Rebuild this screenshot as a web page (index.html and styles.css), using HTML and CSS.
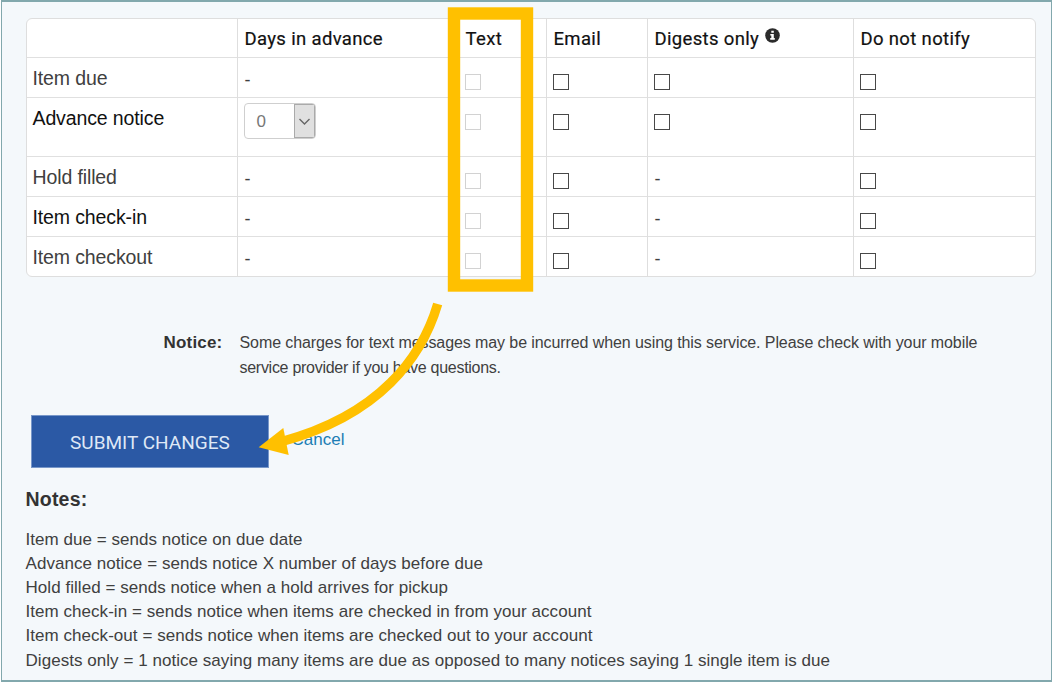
FILE: index.html
```html
<!DOCTYPE html>
<html lang="en">
<head>
<meta charset="utf-8">
<title>Notification settings</title>
<link rel="stylesheet" href="styles.css">
</head>
<body>
<main class="page">
  <div class="table">
    <div class="row head"><div></div><div><span>Days in advance</span></div><div><span>Text</span></div><div><span>Email</span></div><div><span>Digests only</span><svg class="info" viewBox="0 0 15 15"><circle cx="7.5" cy="7.5" r="7.3" fill="#2b2b2b"/><path d="M6.3 2.7h2.5v2H6.3zM5.3 5.9h3.5v4.2h1v1.6H5.2v-1.6h1.1V7.4h-1z" fill="#fff"/></svg></div><div><span>Do not notify</span></div></div>
    <div class="row"><div class="name">Item due</div><div class="dash">-</div><div><i class="box off"></i></div><div><i class="box"></i></div><div><i class="box"></i></div><div><i class="box"></i></div></div>
    <div class="row tall"><div class="name strong">Advance notice</div><div><div class="select"><span>0</span><b><svg viewBox="0 0 19 32"><path d="M4.5 14l5 5 5-5" fill="none" stroke="#666" stroke-width="1.4"/></svg></b></div></div><div><i class="box off"></i></div><div><i class="box"></i></div><div><i class="box"></i></div><div><i class="box"></i></div></div>
    <div class="row"><div class="name">Hold filled</div><div class="dash">-</div><div><i class="box off"></i></div><div><i class="box"></i></div><div class="dash">-</div><div><i class="box"></i></div></div>
    <div class="row"><div class="name strong">Item check-in</div><div class="dash">-</div><div><i class="box off"></i></div><div><i class="box"></i></div><div class="dash">-</div><div><i class="box"></i></div></div>
    <div class="row last"><div class="name">Item checkout</div><div class="dash">-</div><div><i class="box off"></i></div><div><i class="box"></i></div><div class="dash">-</div><div><i class="box"></i></div></div>
  </div>
  <div class="notice"><strong>Notice:</strong><p><span class="n1">Some charges for text messages may be incurred when using this service. Please check with your mobile</span><br><span class="n2">service provider if you have questions.</span></p></div>
  <div class="actions"><button class="submit">SUBMIT CHANGES</button><a class="cancel">Cancel</a></div>
  <h2 class="title">Notes:</h2>
  <div class="notes">
    <div>Item due = sends notice on due date</div>
    <div>Advance notice = sends notice X number of days before due</div>
    <div>Hold filled = sends notice when a hold arrives for pickup</div>
    <div>Item check-in = sends notice when items are checked in from your account</div>
    <div>Item check-out = sends notice when items are checked out to your account</div>
    <div>Digests only = 1 notice saying many items are due as opposed to many notices saying 1 single item is due</div>
  </div>
  <svg class="marks" viewBox="0 0 1053 683"><rect x="454" y="13.5" width="73" height="272" fill="none" stroke="#ffc000" stroke-width="12.4"/><path d="M437.7 304C422 357 380 415 282 441.5" fill="none" stroke="#ffc000" stroke-width="9.4"/><path d="M258.7 447.3L283.3 428L288.7 455Z" fill="#ffc000"/></svg>
</main>
</body>
</html>
```
FILE: styles.css
```css
* { box-sizing: border-box; }
body { margin: 0; background: #fff; font-family: "Liberation Sans", Arial, sans-serif; color: #404040; }
.page { position: relative; width: 1051px; height: 682px; margin-left: 1px; padding: 16px 0 0 23.5px; background: #f4f8fb; border: solid #82a8ad; border-width: 2px 1px; overflow: hidden; }
.table { width: 1010px; height: 259px; background: #fff; border: 1px solid #dedede; border-radius: 6px; overflow: hidden; }
.row { display: grid; grid-template-columns: 211px 221px 88px 101px 206px 182px; height: 40px; border-bottom: 1px solid #e0e0e0; }
.row.head { height: 39px; }
.row.tall { height: 59px; }
.row.last { border-bottom: 0; }
.row > div { padding-left: 7px; border-right: 1px solid #dedede; }
.row > div:last-child { border-right: 0; }
.head > div { font: 400 18.5px/40px Roboto, sans-serif; color: #111; display: flex; letter-spacing: .34px; -webkit-text-stroke: .2px #111; }
.info { width: 15px; height: 15px; margin: 9px 0 0 6px; }
.row > .name { padding-left: 6px; font-size: 19.5px; line-height: 41px; letter-spacing: -.12px; }
.row > .strong { color: #111; }
.dash { font-size: 18px; line-height: 45px; }
.box { display: block; width: 16px; height: 16px; margin: 16px 0 0 -1px; border: 1px solid #484848; background: #fff; }
.off { border-color: #d2d2d2; }
.select { display: flex; width: 72px; height: 36px; margin: 5px 0 0 -1px; border: 1px solid #cfcfcf; border-radius: 4px; background: #fff; overflow: hidden; }
.select span { width: 49px; padding-left: 12px; font-size: 17px; line-height: 35px; color: #777; }
.select b { width: 21px; background: #e0e0e0; border: 1px solid #aaa; }
.select svg { display: block; width: 19px; height: 32px; }
.notice { display: flex; height: 50px; margin-top: 53px; }
.notice strong { width: 197px; margin-right: 17px; text-align: right; font-size: 17px; line-height: 25px; letter-spacing: .2px; color: #333; }
.notice p { margin: 0; font-size: 16px; line-height: 25px; white-space: nowrap; }
.n1 { letter-spacing: -.09px; }
.n2 { letter-spacing: -.28px; }
.actions { display: flex; height: 53px; margin: 35px 0 0 5.4px; }
.submit { width: 238px; height: 53px; padding: 2px 0 0; border: 1px solid #7897c9; background: #2b59a5; color: #dfe8f6; font: 400 19px Roboto, sans-serif; }
.cancel { margin-left: 22.6px; font-size: 17px; line-height: 49px; color: #1b7db4; }
.title { margin: 17px 0 0; font-size: 19.5px; line-height: 28px; letter-spacing: .2px; color: #333; }
.notes { margin-top: 14.6px; font-size: 17px; line-height: 24.2px; letter-spacing: .045px; white-space: nowrap; }
.marks { position: absolute; left: -2px; top: -2px; width: 1053px; height: 683px; }
```
